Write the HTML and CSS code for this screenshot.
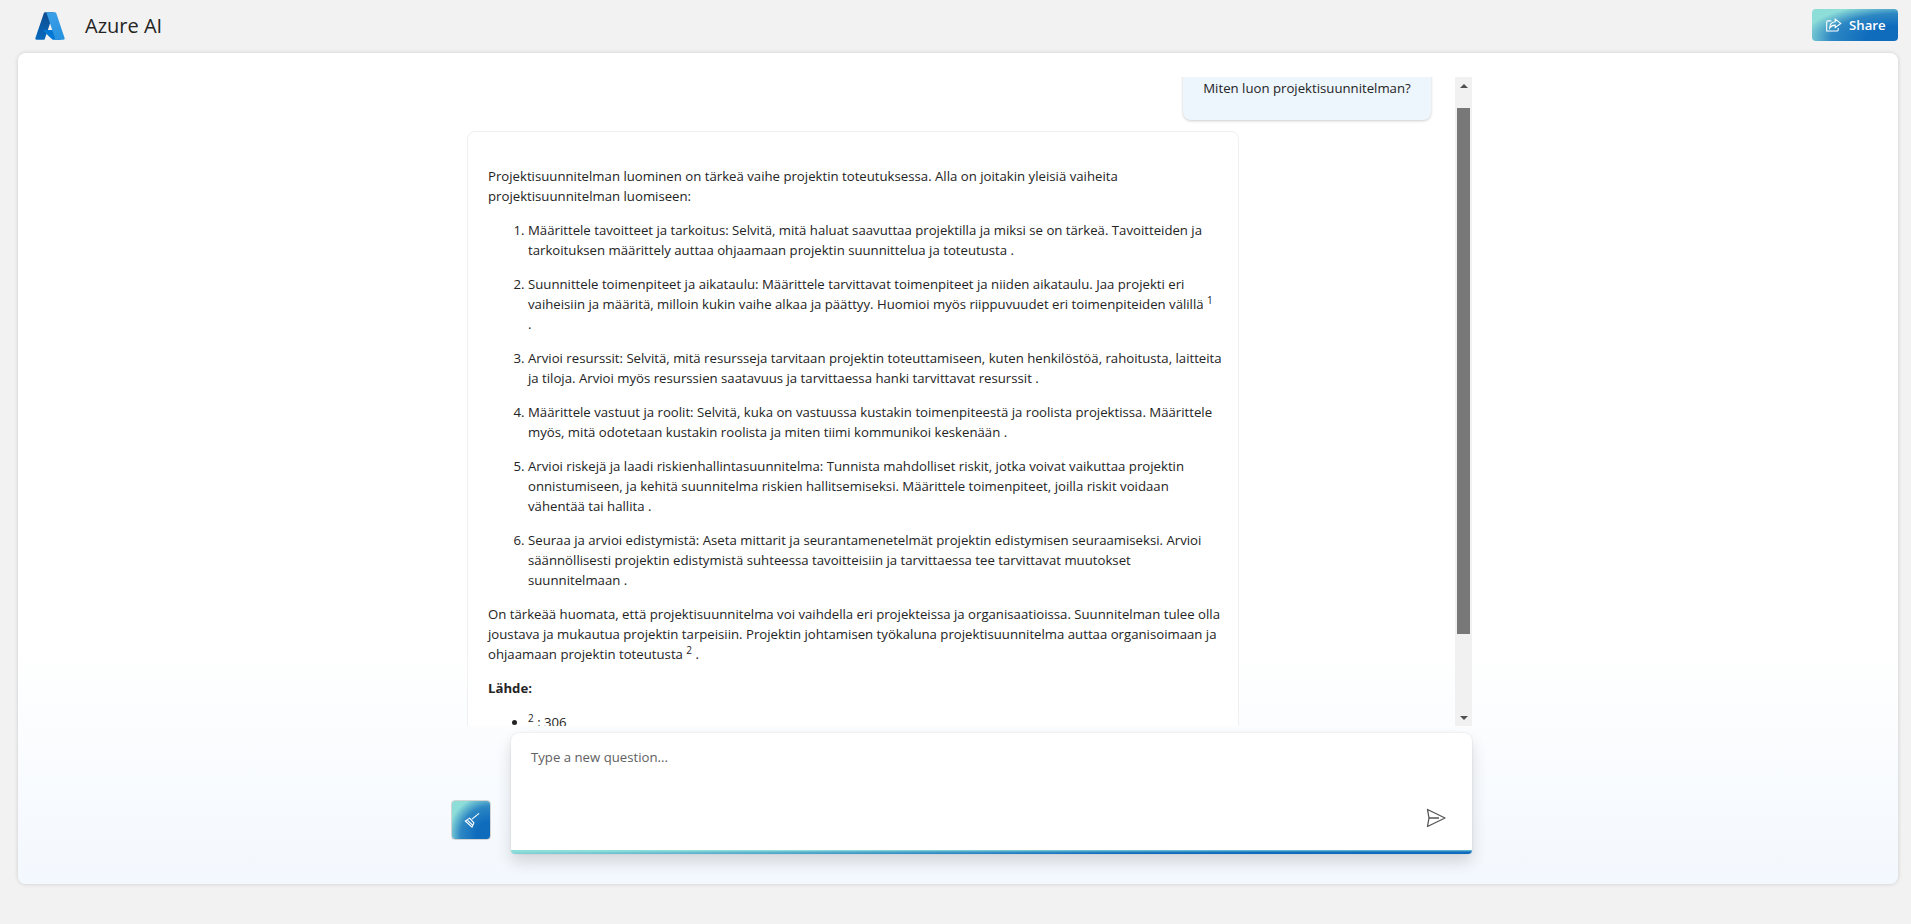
FILE: index.html
```html
<!DOCTYPE html>
<html lang="fi">
<head>
<meta charset="utf-8">
<title>Azure AI</title>
<link rel="stylesheet" href="styles.css">
</head>
<body>
<svg class="defs" width="0" height="0" aria-hidden="true">
  <defs>
    <linearGradient id="az-a" x1="45" y1="6" x2="19" y2="86" gradientUnits="userSpaceOnUse"><stop offset="0" stop-color="#114a8b"/><stop offset="1" stop-color="#0669bc"/></linearGradient>
    <linearGradient id="az-b" x1="52" y1="6" x2="82" y2="88" gradientUnits="userSpaceOnUse"><stop offset="0" stop-color="#3a9fe6"/><stop offset="1" stop-color="#2892df"/></linearGradient>
  </defs>
</svg>
<header class="topbar">
  <div class="brand">
    <svg class="logo" viewBox="0 0 96 96" aria-hidden="true">
      <path fill="url(#az-a)" d="M33.34 6.54h26.04l-27.03 80.1a4.15 4.15 0 0 1-3.94 2.81H8.15a4.14 4.14 0 0 1-3.93-5.47L29.4 9.38a4.15 4.15 0 0 1 3.94-2.83z"/>
      <path fill="#0078d4" d="M71.17 60.26H29.88a1.91 1.91 0 0 0-1.3 3.31l26.53 24.76a4.17 4.17 0 0 0 2.85 1.13h23.38z"/>
      <path fill="url(#az-b)" d="M66.6 9.36a4.14 4.14 0 0 0-3.93-2.82H33.65a4.15 4.15 0 0 1 3.93 2.82l25.18 74.62a4.15 4.15 0 0 1-3.93 5.48h29.02a4.15 4.15 0 0 0 3.93-5.48z"/>
    </svg>
    <h1 class="brand-name">Azure AI</h1>
  </div>
  <button class="share" type="button">
    <svg class="share-icon" viewBox="0 0 20 20" aria-hidden="true">
      <path d="M7.5 4.5H3.5a1.5 1.5 0 0 0-1.5 1.5v10.5h12a1.5 1.5 0 0 0 1.500-1.500V13"/>
      <path d="M12 2.500l6.500 5-6.500 5V9.500c-3 0-5 1-6.500 3.500 0-4.200 2.500-7 6.500-7.500z"/>
    </svg>
    <span>Share</span>
  </button>
</header>
<main class="panel">
  <section class="chat">
    <div class="messages">
      <div class="question">Miten luon projektisuunnitelman?</div>
      <article class="answer">
        <p>Projektisuunnitelman luominen on tärkeä vaihe projektin toteutuksessa. Alla on joitakin yleisiä vaiheita<br>projektisuunnitelman luomiseen:</p>
        <ol>
          <li>Määrittele tavoitteet ja tarkoitus: Selvitä, mitä haluat saavuttaa projektilla ja miksi se on tärkeä. Tavoitteiden ja<br>tarkoituksen määrittely auttaa ohjaamaan projektin suunnittelua ja toteutusta .</li>
          <li>Suunnittele toimenpiteet ja aikataulu: Määrittele tarvittavat toimenpiteet ja niiden aikataulu. Jaa projekti eri<br>vaiheisiin ja määritä, milloin kukin vaihe alkaa ja päättyy. Huomioi myös riippuvuudet eri toimenpiteiden välillä <sup>1</sup><br>.</li>
          <li>Arvioi resurssit: Selvitä, mitä resursseja tarvitaan projektin toteuttamiseen, kuten henkilöstöä, rahoitusta, laitteita<br>ja tiloja. Arvioi myös resurssien saatavuus ja tarvittaessa hanki tarvittavat resurssit .</li>
          <li>Määrittele vastuut ja roolit: Selvitä, kuka on vastuussa kustakin toimenpiteestä ja roolista projektissa. Määrittele<br>myös, mitä odotetaan kustakin roolista ja miten tiimi kommunikoi keskenään .</li>
          <li>Arvioi riskejä ja laadi riskienhallintasuunnitelma: Tunnista mahdolliset riskit, jotka voivat vaikuttaa projektin<br>onnistumiseen, ja kehitä suunnitelma riskien hallitsemiseksi. Määrittele toimenpiteet, joilla riskit voidaan<br>vähentää tai hallita .</li>
          <li>Seuraa ja arvioi edistymistä: Aseta mittarit ja seurantamenetelmät projektin edistymisen seuraamiseksi. Arvioi<br>säännöllisesti projektin edistymistä suhteessa tavoitteisiin ja tarvittaessa tee tarvittavat muutokset<br>suunnitelmaan .</li>
        </ol>
        <p>On tärkeää huomata, että projektisuunnitelma voi vaihdella eri projekteissa ja organisaatioissa. Suunnitelman tulee olla<br>joustava ja mukautua projektin tarpeisiin. Projektin johtamisen työkaluna projektisuunnitelma auttaa organisoimaan ja<br>ohjaamaan projektin toteutusta <sup>2</sup> .</p>
        <p><strong>Lähde:</strong></p>
        <ul>
          <li><sup>2</sup> : 306</li>
        </ul>
      </article>
    </div>
    <div class="scrollbar" aria-hidden="true">
      <div class="scroll-btn"><span class="tri-up"></span></div>
      <div class="scroll-track"><div class="scroll-thumb"></div></div>
      <div class="scroll-btn"><span class="tri-down"></span></div>
    </div>
  </section>
  <section class="composer">
    <button class="clear" type="button" aria-label="Clear">
      <svg viewBox="0 0 20 20" aria-hidden="true">
        <path d="M18 2.500l-7.500 6"/>
        <path d="M8 7.500l4.500 5-2 4.500-7-6.500z"/>
        <path d="M5.800 9.800l5.500 5.200"/>
      </svg>
    </button>
    <div class="input">
      <div class="placeholder">Type a new question...</div>
      <svg class="send" viewBox="0 0 20 20" aria-hidden="true">
        <path d="M1.500 1.500L19 10 1.500 18.500l1.500-8.500z"/>
        <path d="M3 10H13"/>
      </svg>
      <div class="input-bar"></div>
    </div>
  </section>
</main>
</body>
</html>
```
FILE: styles.css
```css
* { box-sizing: border-box; }
html, body { margin: 0; height: 100%; }
body {
  display: flex;
  flex-direction: column;
  height: 924px;
  overflow: hidden;
  background: #f2f2f2;
  color: #242424;
  font-family: "Open Sans", "Noto Sans", "Liberation Sans", sans-serif;
  font-size: 13.2px;
  line-height: 20px;
}
.defs { position: absolute; }
.topbar {
  flex: 0 0 53px;
  display: flex;
  align-items: flex-start;
  justify-content: space-between;
  padding: 9px 13px 0 34px;
}
.brand { display: flex; align-items: center; gap: 19px; height: 33px; }
.logo { width: 32px; height: 32px; display: block; }
.brand-name { margin: 0; font-size: 20px; font-weight: 500; line-height: 28px; color: #242424; }
.share {
  display: flex;
  align-items: center;
  gap: 7px;
  width: 86px;
  height: 32px;
  padding: 0 0 0 13px;
  border: 0;
  border-radius: 4px;
  color: #fff;
  font: 600 13.2px "Open Sans", sans-serif;
  background: radial-gradient(109.81% 107.82% at 100.1% 90.19%, #0f6cbd 33.63%, #2d87c3 70.31%, #8dddd8 100%);
}
.share-icon { width: 17px; height: 17px; fill: none; stroke: #fff; stroke-width: 1.3; }
.panel {
  flex: 0 0 831px;
  margin: 0 13px 0 18px;
  padding: 24px 0 0 433px;
  border-radius: 8px;
  background: linear-gradient(180deg, #fff 0%, #fff 72%, #f3f8fe 100%);
  box-shadow: 0 0 4px rgba(0,0,0,.16);
}
.chat {
  display: flex;
  width: 1005px;
  height: 649px;
  margin-left: 16px;
}
.messages { flex: 1; min-width: 0; overflow: hidden; padding-top: 1px; }
.question {
  width: 248px;
  margin: -20px 24px 11px auto;
  padding: 20px 20px 22px;
  border-radius: 8px;
  background: #edf5fd;
  box-shadow: 0 1px 3px rgba(0,0,0,.2);
  text-align: center;
  white-space: nowrap;
}
.answer {
  width: 772px;
  padding: 20px;
  border-radius: 8px;
  border: 1px solid #f0f0f0;
  background: #fff;
  white-space: nowrap;
}
.answer p { margin: 14px 0; }
.answer ol, .answer ul { margin: 14px 0; padding-left: 40px; }
.answer li { margin-bottom: 14px; }
.answer sup { line-height: 0; font-size: 10px; }
.answer strong { font-weight: 700; }
.scrollbar {
  flex: 0 0 17px;
  display: flex;
  flex-direction: column;
  background: #f1f1f1;
}
.scroll-btn { flex: 0 0 17px; display: flex; align-items: center; justify-content: center; }
.scroll-track { flex: 1; padding: 14px 2px 0; }
.scroll-thumb { height: 526px; background: #787878; }
.tri-up, .tri-down { width: 0; height: 0; border-left: 4px solid transparent; border-right: 4px solid transparent; }
.tri-up { border-bottom: 4px solid #505050; }
.tri-down { border-top: 4px solid #505050; }
.composer { display: flex; align-items: flex-end; gap: 20px; margin-top: 7px; }
.clear {
  flex: 0 0 40px;
  height: 40px;
  margin-bottom: 14px;
  padding: 0;
  border: 1px solid #d4d4d4;
  border-radius: 4px;
  background: radial-gradient(109.81% 107.82% at 100.1% 90.19%, #0f6cbd 33.63%, #2d87c3 70.31%, #8dddd8 100%);
  display: flex;
  align-items: center;
  justify-content: center;
}
.clear svg { width: 19px; height: 19px; fill: none; stroke: #fff; stroke-width: 1.2; }
.input {
  width: 961px;
  height: 121px;
  display: flex;
  flex-direction: column;
  padding: 14px 0 0;
  border-radius: 8px 8px 4px 4px;
  overflow: hidden;
  background: #fff;
  box-shadow: 0 8px 16px rgba(0,0,0,.14), 0 0 2px rgba(0,0,0,.12);
}
.placeholder { flex: 1; padding-left: 20px; color: #616161; }
.send { align-self: flex-end; width: 20px; height: 20px; margin: 0 26px 22px 0; fill: none; stroke: #555; stroke-width: 1.3; stroke-linejoin: round; }
.input-bar {
  flex: 0 0 4px;
  background: radial-gradient(106.04% 106.06% at 100.1% 90.19%, #0f6cbd 33.63%, #8dddd8 100%);
}
```
